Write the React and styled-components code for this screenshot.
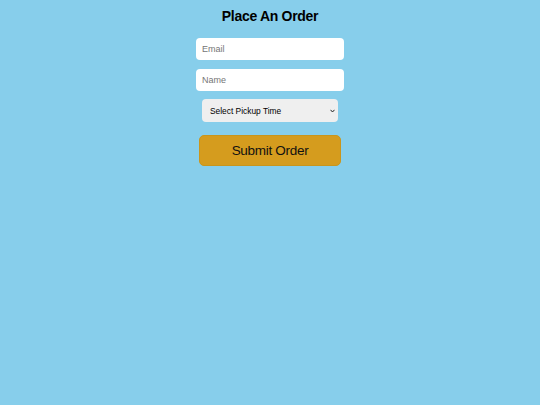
import React from "react";
import styled, { createGlobalStyle } from "styled-components";

const Global = createGlobalStyle`
  html, body { margin: 0; padding: 0; background: #87ceeb; }
  body { font-family: "Liberation Sans", Arial, sans-serif; }
`;

const Page = styled.div`
  width: 540px;
  height: 405px;
  background: #87ceeb;
  display: flex;
  flex-direction: column;
  align-items: center;
`;

const Title = styled.h2`
  margin: 8px 0 0;
  font-size: 14px;
  line-height: 17px;
  letter-spacing: -0.3px;
  font-weight: 700;
  color: #000;
`;

const Form = styled.form`
  display: flex;
  flex-direction: column;
  align-items: center;
  margin-top: 13px;
`;

const Input = styled.input`
  box-sizing: border-box;
  width: 148px;
  height: 22px;
  margin-top: ${(p) => p.$mt || 0}px;
  border: none;
  border-radius: 4px;
  background: #fff;
  padding: 0 6px;
  font-family: "Liberation Sans", Arial, sans-serif;
  font-size: 9px;
  color: #222;
  outline: none;
  &::placeholder { color: #757575; }
`;

const SelectWrap = styled.div`
  position: relative;
  margin-top: 8px;
  width: 136px;
  height: 23px;
`;

const Select = styled.select`
  appearance: none;
  box-sizing: border-box;
  width: 100%;
  height: 100%;
  border: none;
  border-radius: 4px;
  background: #efefef;
  padding: 0 0 0 8px;
  font-family: "Liberation Sans", Arial, sans-serif;
  font-size: 8.4px;
  color: #000;
  outline: none;
`;

const Chevron = styled.svg`
  position: absolute;
  right: 3px;
  top: 10px;
  width: 5px;
  height: 4px;
  pointer-events: none;
`;

const Button = styled.button`
  box-sizing: border-box;
  margin-top: 13px;
  width: 142px;
  height: 31px;
  border: 1px solid #c9951c;
  border-radius: 5px;
  background: #d59c1e;
  color: #111;
  font-family: "Liberation Sans", Arial, sans-serif;
  font-size: 13.5px;
  letter-spacing: -0.3px;
  cursor: pointer;
`;

export default function App() {
  return (
    <Page>
      <Global />
      <Title>Place An Order</Title>
      <Form onSubmit={(e) => e.preventDefault()}>
        <Input type="email" placeholder="Email" />
        <Input type="text" placeholder="Name" $mt={9} />
        <SelectWrap>
          <Select defaultValue="">
            <option value="">Select Pickup Time</option>
            <option value="9">9:00 AM</option>
            <option value="12">12:00 PM</option>
          </Select>
          <Chevron viewBox="0 0 5 4">
            <path d="M0.5 0.8 L2.5 3 L4.5 0.8" fill="none" stroke="#222" strokeWidth="1" />
          </Chevron>
        </SelectWrap>
        <Button type="submit">Submit Order</Button>
      </Form>
    </Page>
  );
}
